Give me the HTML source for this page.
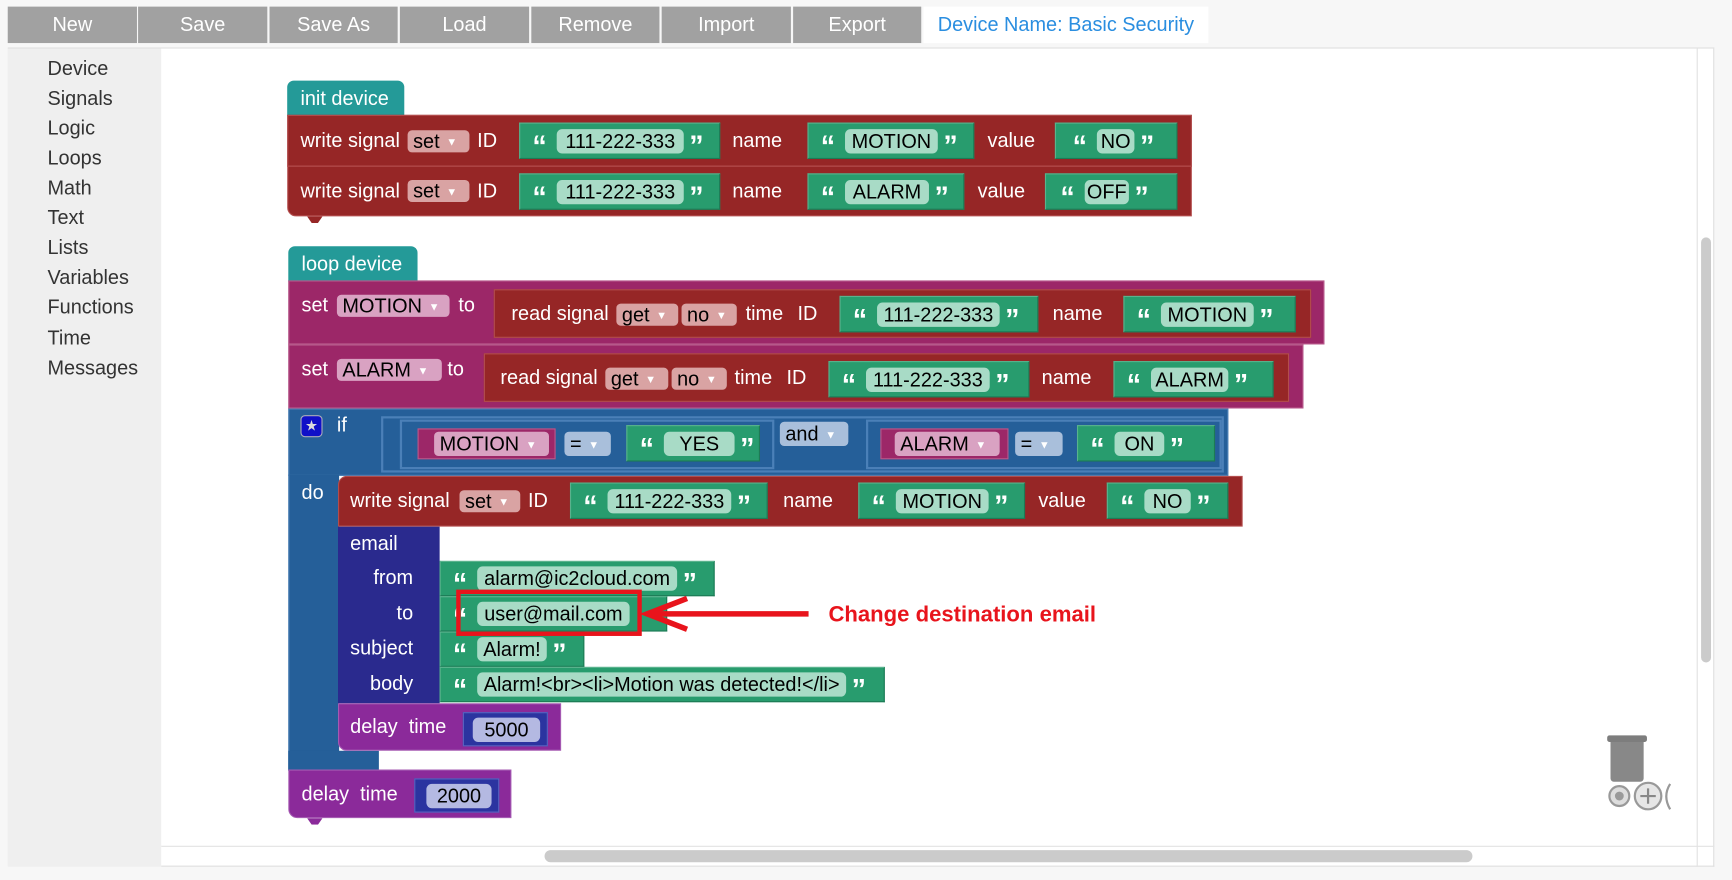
<!DOCTYPE html>
<html><head><meta charset="utf-8"><style>
html,body{margin:0;padding:0;width:1732px;height:880px;overflow:hidden;background:#f7f7f7}
#w{position:absolute;left:0;top:0;width:1568px;height:797px;transform:scale(1.1046,1.1041);transform-origin:0 0;font-family:"Liberation Sans",Arial,sans-serif;font-size:18px}
.a{position:absolute;box-sizing:border-box}
.btn{position:absolute;top:6px;height:33px;background:#a1a1a1;color:#fff;text-align:center;line-height:33px;font-size:18px}
.side{position:absolute;left:43px;color:#333;font-size:18px}
.t{position:absolute;color:#fff;line-height:22px;white-space:nowrap}
.red{background:#962626;border:1px solid #b34d4d}
.g{position:absolute;box-sizing:border-box;background:#289c6e;border:1px solid #5ab28d;border-right-color:#1d7a55;border-bottom-color:#1d7a55;display:flex;align-items:center;padding-left:11px;gap:5px}
.q{color:#fff;font-weight:bold;font-family:"Liberation Sans",sans-serif;font-size:26px;line-height:22px;height:22px;width:17px;letter-spacing:-2px;overflow:hidden;padding-top:4px;box-sizing:border-box}
.f{display:inline-block;background:#a8dbc6;border-radius:5px;color:#000;text-align:center;height:22px;line-height:22px;font-size:18px;white-space:nowrap}
.dd{position:absolute;box-sizing:border-box;border-radius:4px;color:#000;height:20px;line-height:20px;padding-left:5px;font-size:18px;white-space:nowrap}
.dd i{font-style:normal;font-size:10px;color:#fff;margin-left:6px;vertical-align:2px}
.num{position:absolute;box-sizing:border-box;background:#2b34a0;border:1px solid #5a63c0;display:flex;align-items:center;padding-left:8px}
.num span{background:#b4b9e2;border-radius:5px;height:22px;line-height:22px;color:#000;text-align:center}
</style></head><body><div id="w">
<div class="btn" style="left:7px;width:117px">New</div>
<div class="btn" style="left:125px;width:117px">Save</div>
<div class="btn" style="left:244px;width:116px">Save As</div>
<div class="btn" style="left:362px;width:117px">Load</div>
<div class="btn" style="left:481px;width:116px">Remove</div>
<div class="btn" style="left:599px;width:117px">Import</div>
<div class="btn" style="left:718px;width:116px">Export</div>
<div class="a" style="left:836px;top:6px;width:258px;height:33px;background:#fff;color:#2a8ee0;line-height:33px;text-align:center">Device Name: Basic Security</div>
<div class="a" style="left:7px;top:43px;width:1545px;height:1px;background:#ddd"></div>
<div class="a" style="left:7px;top:44px;width:139px;height:741px;background:#efefef"></div>
<div class="side" style="top:52px">Device</div>
<div class="side" style="top:79px">Signals</div>
<div class="side" style="top:106px">Logic</div>
<div class="side" style="top:133px">Loops</div>
<div class="side" style="top:160px">Math</div>
<div class="side" style="top:187px">Text</div>
<div class="side" style="top:214px">Lists</div>
<div class="side" style="top:241px">Variables</div>
<div class="side" style="top:268px">Functions</div>
<div class="side" style="top:296px">Time</div>
<div class="side" style="top:323px">Messages</div>
<div class="a" style="left:146px;top:44px;width:1406px;height:741px;background:#fff;border-bottom:1px solid #ddd;border-right:1px solid #ddd"></div>
<div class="a" style="left:1536px;top:44px;width:1px;height:741px;background:#e2e2e2"></div>
<div class="a" style="left:146px;top:766px;width:1406px;height:1px;background:#e2e2e2"></div>
<div class="a" style="left:1540px;top:215px;width:9px;height:385px;background:#cbcbcb;border-radius:5px"></div>
<div class="a" style="left:493px;top:770px;width:840px;height:11px;background:#cbcbcb;border-radius:6px"></div>

<div class="a" style="left:260px;top:73px;width:106px;height:32px;background:#249a98;border-radius:6px 6px 0 0"></div>
<div class="t" style="left:272px;top:78px">init device</div>
<div class="a red" style="left:260px;top:104px;width:819px;height:47px"></div>
<div class="a red" style="left:260px;top:150px;width:819px;height:46px;border-radius:0 0 0 8px"></div>
<div class="a" style="left:278px;top:196px;width:14px;height:6px;background:#962626;clip-path:polygon(0 0,100% 0,70% 100%,30% 100%)"></div>
<div class="t" style="left:272px;top:116px">write signal</div>
<div class="dd" style="left:369px;top:118px;width:56px;background:#d9a3a3">set<i>▼</i></div>
<div class="t" style="left:432px;top:116px">ID</div>
<div class="g" style="left:470px;top:111px;width:182px;height:33px"><span class="q">“</span><span class="f" style="width:115px">111-222-333</span><span class="q">”</span></div>
<div class="t" style="left:663px;top:116px">name</div>
<div class="g" style="left:731px;top:111px;width:151px;height:33px"><span class="q">“</span><span class="f" style="width:84px">MOTION</span><span class="q">”</span></div>
<div class="t" style="left:894px;top:116px">value</div>
<div class="g" style="left:955px;top:111px;width:111px;height:33px;padding-left:15px"><span class="q">“</span><span class="f" style="width:34px">NO</span><span class="q">”</span></div>

<div class="t" style="left:272px;top:162px">write signal</div>
<div class="dd" style="left:369px;top:163px;width:56px;background:#d9a3a3">set<i>▼</i></div>
<div class="t" style="left:432px;top:162px">ID</div>
<div class="g" style="left:470px;top:157px;width:182px;height:33px"><span class="q">“</span><span class="f" style="width:115px">111-222-333</span><span class="q">”</span></div>
<div class="t" style="left:663px;top:162px">name</div>
<div class="g" style="left:731px;top:157px;width:142px;height:33px"><span class="q">“</span><span class="f" style="width:76px">ALARM</span><span class="q">”</span></div>
<div class="t" style="left:885px;top:162px">value</div>
<div class="g" style="left:946px;top:157px;width:120px;height:33px;padding-left:13px"><span class="q">“</span><span class="f" style="width:40px">OFF</span><span class="q">”</span></div>

<div class="a" style="left:261px;top:223px;width:117px;height:32px;background:#249a98;border-radius:6px 6px 0 0"></div>
<div class="t" style="left:273px;top:228px">loop device</div>
<div class="a" style="left:261px;top:370px;width:851px;height:61px;background:#255f99;border:1px solid #4a7fb5"></div>
<div class="a" style="left:261px;top:430px;width:46px;height:268px;background:#255f99;border-left:1px solid #4a7fb5"></div>
<div class="a" style="left:261px;top:680px;width:82px;height:18px;background:#255f99"></div>
<div class="a" style="left:261px;top:254px;width:938px;height:58px;background:#9c2768;border:1px solid #b85a8c"></div>
<div class="t" style="left:273px;top:265px">set</div>
<div class="dd" style="left:305px;top:267px;width:102px;background:#d9a2c2">MOTION<i>▼</i></div>
<div class="t" style="left:415px;top:265px">to</div>
<div class="a red" style="left:447px;top:262px;width:740px;height:44px"></div>
<div class="t" style="left:463px;top:273px">read signal</div>
<div class="dd" style="left:558px;top:275px;width:56px;background:#d9a3a3">get<i>▼</i></div>
<div class="dd" style="left:617px;top:275px;width:50px;background:#d9a3a3">no<i>▼</i></div>
<div class="t" style="left:675px;top:273px">time</div>
<div class="t" style="left:722px;top:273px">ID</div>
<div class="g" style="left:760px;top:268px;width:180px;height:33px"><span class="q">“</span><span class="f" style="width:111px">111-222-333</span><span class="q">”</span></div>
<div class="t" style="left:953px;top:273px">name</div>
<div class="g" style="left:1017px;top:268px;width:156px;height:33px"><span class="q">“</span><span class="f" style="width:84px">MOTION</span><span class="q">”</span></div>
<div class="a" style="left:261px;top:312px;width:919px;height:58px;background:#9c2768;border:1px solid #b85a8c"></div>
<div class="t" style="left:273px;top:323px">set</div>
<div class="dd" style="left:305px;top:325px;width:95px;background:#d9a2c2">ALARM<i>▼</i></div>
<div class="t" style="left:405px;top:323px">to</div>
<div class="a red" style="left:438px;top:320px;width:729px;height:44px"></div>
<div class="t" style="left:453px;top:331px">read signal</div>
<div class="dd" style="left:548px;top:333px;width:57px;background:#d9a3a3">get<i>▼</i></div>
<div class="dd" style="left:608px;top:333px;width:50px;background:#d9a3a3">no<i>▼</i></div>
<div class="t" style="left:665px;top:331px">time</div>
<div class="t" style="left:712px;top:331px">ID</div>
<div class="g" style="left:750px;top:327px;width:182px;height:33px"><span class="q">“</span><span class="f" style="width:112px">111-222-333</span><span class="q">”</span></div>
<div class="t" style="left:943px;top:331px">name</div>
<div class="g" style="left:1008px;top:327px;width:145px;height:33px"><span class="q">“</span><span class="f" style="width:70px">ALARM</span><span class="q">”</span></div>
<div class="a" style="left:272px;top:376px;width:20px;height:20px;background:#1010c8;border:1px solid #aab;border-radius:4px;color:#ddd;font-size:13px;line-height:18px;text-align:center">★</div>
<div class="t" style="left:305px;top:374px">if</div>
<div class="a" style="left:345px;top:377px;width:763px;height:51px;border:2px solid #4b80b8;background:#255f99"></div>
<div class="a" style="left:362px;top:380px;width:339px;height:45px;border:2px solid #4b80b8"></div>
<div class="a" style="left:378px;top:388px;width:125px;height:28px;background:#9c2768;border:1px solid #b85a8c"></div>
<div class="dd" style="left:393px;top:391px;width:104px;height:22px;line-height:22px;background:#d9a2c2">MOTION<i>▼</i></div>
<div class="dd" style="left:511px;top:391px;width:42px;height:22px;line-height:22px;background:#a9bfdb">=<i>▼</i></div>
<div class="g" style="left:567px;top:385px;width:121px;height:33px"><span class="q">“</span><span class="f" style="width:64px">YES</span><span class="q">”</span></div>
<div class="dd" style="left:706px;top:382px;width:62px;height:22px;line-height:22px;background:#a9bfdb">and<i>▼</i></div>
<div class="a" style="left:784px;top:380px;width:322px;height:45px;border:2px solid #4b80b8"></div>
<div class="a" style="left:797px;top:388px;width:116px;height:28px;background:#9c2768;border:1px solid #b85a8c"></div>
<div class="dd" style="left:810px;top:391px;width:95px;height:22px;line-height:22px;background:#d9a2c2">ALARM<i>▼</i></div>
<div class="dd" style="left:919px;top:391px;width:43px;height:22px;line-height:22px;background:#a9bfdb">=<i>▼</i></div>
<div class="g" style="left:975px;top:385px;width:125px;height:33px"><span class="q">“</span><span class="f" style="width:45px">ON</span><span class="q">”</span></div>
<div class="t" style="left:273px;top:435px">do</div>
<div class="a red" style="left:306px;top:431px;width:819px;height:46px;border-radius:8px 0 0 0"></div>
<div class="t" style="left:317px;top:442px">write signal</div>
<div class="dd" style="left:416px;top:444px;width:55px;background:#d9a3a3">set<i>▼</i></div>
<div class="t" style="left:478px;top:442px">ID</div>
<div class="g" style="left:516px;top:437px;width:179px;height:33px"><span class="q">“</span><span class="f" style="width:112px">111-222-333</span><span class="q">”</span></div>
<div class="t" style="left:709px;top:442px">name</div>
<div class="g" style="left:777px;top:437px;width:151px;height:33px"><span class="q">“</span><span class="f" style="width:84px">MOTION</span><span class="q">”</span></div>
<div class="t" style="left:940px;top:442px">value</div>
<div class="g" style="left:1002px;top:437px;width:110px;height:33px"><span class="q">“</span><span class="f" style="width:42px">NO</span><span class="q">”</span></div>
<div class="a" style="left:306px;top:477px;width:92px;height:160px;background:#2a2a8e"></div>
<div class="t" style="left:317px;top:481px">email</div>
<div class="t" style="left:338px;top:512px">from</div>
<div class="t" style="left:359px;top:544px">to</div>
<div class="t" style="left:317px;top:576px">subject</div>
<div class="t" style="left:335px;top:608px">body</div>
<div class="g" style="left:398px;top:508px;width:249px;height:32px"><span class="q">“</span><span class="f" style="width:181px">alarm@ic2cloud.com</span><span class="q">”</span></div>
<div class="g" style="left:398px;top:540px;width:206px;height:32px"><span class="q">“</span><span class="f" style="width:138px">user@mail.com</span></div>
<div class="g" style="left:398px;top:572px;width:131px;height:32px"><span class="q">“</span><span class="f" style="width:63px">Alarm!</span><span class="q">”</span></div>
<div class="g" style="left:398px;top:604px;width:403px;height:32px"><span class="q">“</span><span class="f" style="width:334px">Alarm!&lt;br&gt;&lt;li&gt;Motion was detected!&lt;/li&gt;</span><span class="q">”</span></div>
<div class="a" style="left:413px;top:534px;width:168px;height:42px;border:4px solid #e8141c"></div>
<svg class="a" style="left:580px;top:538px" width="160" height="38"><path d="M152 18 L12 18" stroke="#e8141c" stroke-width="5"/><path d="M42 4 L6 18 L42 32" stroke="#e8141c" stroke-width="5" fill="none"/></svg>
<div class="a" style="left:750px;top:544px;color:#e8141c;font-weight:bold;font-size:20px;line-height:26px;white-space:nowrap">Change destination email</div>
<div class="a" style="left:306px;top:637px;width:202px;height:43px;background:#8b2a9a;border-radius:0 0 0 8px;border:1px solid #a55ab2"></div>
<div class="t" style="left:317px;top:647px">delay&nbsp; time</div>
<div class="num" style="left:419px;top:645px;width:77px;height:31px"><span style="width:61px">5000</span></div>
<div class="a" style="left:261px;top:697px;width:202px;height:44px;background:#8b2a9a;border-radius:0 0 0 8px;border:1px solid #a55ab2"></div>
<div class="a" style="left:278px;top:741px;width:14px;height:6px;background:#8b2a9a;clip-path:polygon(0 0,100% 0,70% 100%,30% 100%)"></div>
<div class="t" style="left:273px;top:708px">delay&nbsp; time</div>
<div class="num" style="left:375px;top:705px;width:77px;height:31px;padding-left:10px"><span style="width:59px">2000</span></div>
<div class="a" style="left:1455px;top:666px;width:36px;height:6px;background:#7d7d7d;border-radius:2px"></div>
<div class="a" style="left:1458px;top:672px;width:30px;height:36px;background:#888;border-radius:0 0 3px 3px"></div>
<svg class="a" style="left:1452px;top:707px" width="64" height="30"><circle cx="14" cy="14" r="9" fill="#ddd" stroke="#999" stroke-width="2"/><circle cx="14" cy="14" r="4" fill="#999"/><circle cx="40" cy="14" r="12" fill="#e6e6e6" stroke="#999" stroke-width="2"/><path d="M40 7v14M33 14h14" stroke="#888" stroke-width="2"/><path d="M60 3 Q53 14 60 26" stroke="#999" stroke-width="2" fill="none"/></svg>
</div></body></html>
